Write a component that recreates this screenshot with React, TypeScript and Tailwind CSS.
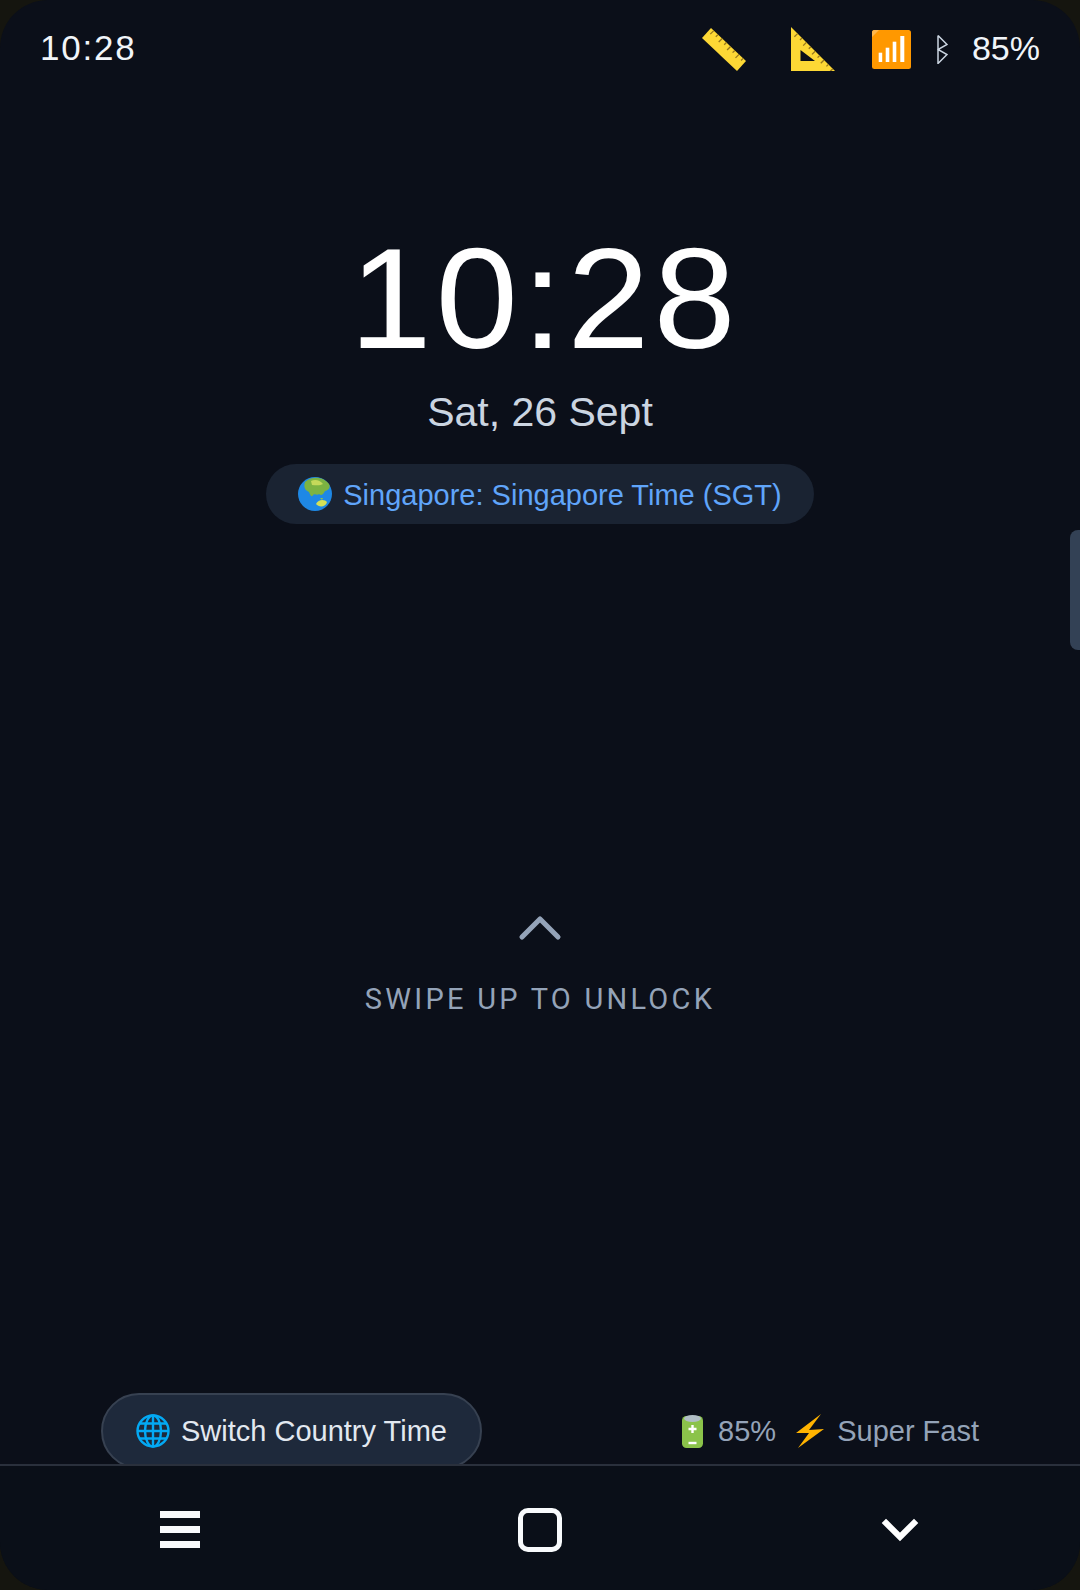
import { ChevronUp, ChevronDown } from 'lucide-react'

const RULER_TICKS = [0.08, 0.2, 0.32, 0.44, 0.56, 0.68, 0.8, 0.92]
const SQUARE_TICKS = [0.15, 0.25, 0.35, 0.45, 0.55, 0.65, 0.75, 0.85, 0.95]

function Ruler() {
  return (
    <svg viewBox="0 0 44 44" className="w-[44px] h-[44px]">
      <path d="M0 11 L9 1 L44 34 L35 44 Z" fill="#fdd835" />
      {RULER_TICKS.map((t, i) => {
        const x = 9 + 35 * t
        const y = 1 + 33 * t
        const len = i % 2 === 0 ? 3.5 : 2.2
        return <path key={t} d={`M${x} ${y} l${-len} ${len}`} stroke="#96761c" strokeWidth="1.3" />
      })}
    </svg>
  )
}

function SetSquare() {
  return (
    <svg viewBox="0 0 44 44" className="w-[44px] h-[44px]">
      <path fillRule="evenodd" d="M0 0 L44 44 L0 44 Z M9.5 23 L9.5 34 L24 34 Z" fill="#fdd835" />
      {SQUARE_TICKS.map((t, i) => {
        const p = 44 * t
        const len = i % 2 === 0 ? 3.2 : 2
        return <path key={t} d={`M${p} ${p} l${-len} ${len}`} stroke="#96761c" strokeWidth="1.3" />
      })}
    </svg>
  )
}

function Signal() {
  return (
    <svg viewBox="0 0 39 39" className="w-[39px] h-[39px]">
      <rect width="39" height="39" rx="2.5" fill="#ff9800" />
      <path d="M0 7 V2.5 A2.5 2.5 0 0 1 2.5 0 H7 Z" fill="#ffb74d" />
      <rect x="6.7" y="22.7" width="3.5" height="9.3" fill="#fff" />
      <rect x="13.7" y="17.7" width="3.6" height="14.3" fill="#fff" />
      <rect x="20.7" y="11.7" width="3.6" height="20.3" fill="#fff" />
      <rect x="28.3" y="6" width="4" height="26" fill="#fff" />
    </svg>
  )
}

function Bluetooth() {
  return (
    <svg viewBox="0 0 11 29" className="w-[11px] h-[29px]" fill="none" stroke="#cbd5e1" strokeWidth="1.5">
      <path d="M1 0.5 V28.5 L10 19.5 L1 14.5 L10 9.5 L1 0.5" />
    </svg>
  )
}

function EarthAsia() {
  return (
    <svg viewBox="0 0 34 34" className="w-[34px] h-[34px]">
      <circle cx="17" cy="17" r="17" fill="#1e88e5" />
      <path d="M7 5 C13 -1 25 -1 31 7 C33 11 30 13 27 14 C25 18 23 19 21 17 C19 19 17 16 15 18 C14 21 12 18 11 15 C8 14 5 11 7 5 Z" fill="#7cb342" />
      <path d="M13 4 C17 2 22 3 25 7 C22 9 17 8 14 8 Z" fill="#c5d95a" />
      <path d="M18 27 C20 22 27 22 29 25 C28 30 21 31 18 27 Z" fill="#d4e157" />
      <path d="M22 21 l3 0 l-1 2 Z" fill="#8bc34a" />
    </svg>
  )
}

function Globe() {
  return (
    <svg viewBox="0 0 34 34" className="w-[34px] h-[34px]" fill="none" stroke="#03a9f4" strokeWidth="2.4">
      <circle cx="17" cy="17" r="15.5" />
      <ellipse cx="17" cy="17" rx="8" ry="15.5" />
      <path d="M17 1.5 V32.5 M1.5 17 H32.5 M4 9.5 H30 M4 24.5 H30" />
    </svg>
  )
}

function Battery() {
  return (
    <svg viewBox="0 0 21 34" className="w-[21px] h-[34px]">
      <rect x="0" y="2" width="21" height="32" rx="4.5" fill="#8bc34a" />
      <ellipse cx="10.5" cy="4.5" rx="8.5" ry="3.5" fill="#b0bec5" />
      <path d="M10.5 11 v8 M6.5 15 h8" stroke="#fff" strokeWidth="2.4" />
      <path d="M6.5 29 h8" stroke="#fff" strokeWidth="2.4" />
    </svg>
  )
}

function Bolt() {
  return (
    <svg viewBox="0 0 28 34" className="w-[28px] h-[34px]">
      <path d="M25 0 L0 19 L13 19 L2 34 L28 15 L13 16 Z" fill="#ffb300" />
    </svg>
  )
}

export default function App() {
  return (
    <div className="w-[1080px] h-[1590px] bg-[#15150f] overflow-hidden font-['Liberation_Sans',sans-serif]">
      <div className="relative w-full h-full rounded-[48px] bg-[#0b0f19] flex flex-col overflow-hidden">
        {/* status bar */}
        <div className="flex items-center justify-between px-10 pt-[26px] h-[72px] text-[#f1f5f9] leading-none">
          <span className="mb-[3px] text-[35px] tracking-[1.8px]">10:28</span>
          <div className="flex items-center">
            <Ruler />
            <div className="ml-[45px]"><SetSquare /></div>
            <div className="ml-[37px]"><Signal /></div>
            <div className="ml-[26px]"><Bluetooth /></div>
            <span className="ml-[24px] mb-[3px] text-[34px]">85%</span>
          </div>
        </div>

        {/* clock */}
        <div className="flex flex-col items-center mt-[156px]">
          <div className="ml-[9px] text-[142px] leading-none tracking-[4px] scale-x-[1.04] text-white">10:28</div>
          <div className="mt-[22px] text-[41px] leading-none text-[#cbd5e1]">Sat, 26 Sept</div>
          <div className="mt-[31px] h-[60px] rounded-full bg-[#1a2332] flex items-center px-8 gap-[11px] text-[29px] text-[#60a5fa]">
            <EarthAsia />
            <span className="pt-[3px]">Singapore: Singapore Time (SGT)</span>
          </div>
        </div>

        {/* swipe hint */}
        <div className="flex flex-col items-center mt-[368px] text-[#94a3b8]">
          <ChevronUp size={72} strokeWidth={1.7} />
          <div className="mt-[21px] text-[29px] leading-none tracking-[3.25px] font-['Roboto',sans-serif]">SWIPE UP TO UNLOCK</div>
        </div>

        {/* bottom row */}
        <div className="mt-auto flex items-center justify-between px-[101px] mb-[-5px]">
          <div className="h-[76px] rounded-full border-2 border-[#374151] bg-[#1e293b] flex items-center px-[33px] gap-[11px] text-[29px] text-[#e2e8f0]">
            <Globe />
            <span className="pt-[2px]">Switch Country Time</span>
          </div>
          <div className="flex items-center text-[29px] text-[#94a3b8]">
            <Battery />
            <span className="ml-[15px] pt-[2px]">85%</span>
            <div className="ml-[20px]"><Bolt /></div>
            <span className="ml-[13px] pt-[2px]">Super Fast</span>
          </div>
        </div>

        {/* nav bar */}
        <div className="relative z-10 h-[126px] pt-[3px] border-t-2 border-[#2a303c] bg-[#0a0f18] grid grid-cols-3 items-center justify-items-center text-white">
          <div className="w-[40px] flex flex-col gap-[8px]">
            <div className="h-[7px] bg-[#f8fafc]" />
            <div className="h-[7px] bg-[#f8fafc]" />
            <div className="h-[7px] bg-[#f8fafc]" />
          </div>
          <div className="w-[44px] h-[44px] rounded-[10px] border-[5px] border-[#f8fafc]" />
          <ChevronDown size={56} strokeWidth={2.6} strokeLinecap="square" strokeLinejoin="miter" />
        </div>

        {/* side handle */}
        <div className="absolute right-0 top-[530px] w-[10px] h-[120px] rounded-l-[8px] bg-[#334155]" />
      </div>
    </div>
  )
}
